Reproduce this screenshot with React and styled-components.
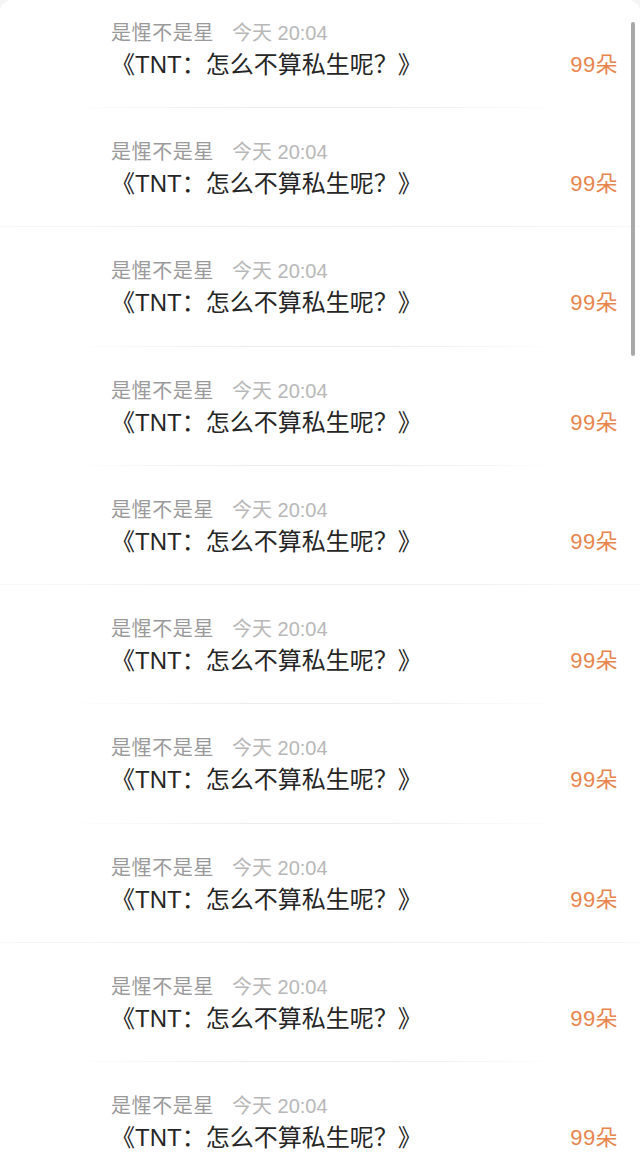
import React from 'react'
import styled, { createGlobalStyle } from 'styled-components'

const GlobalStyle = createGlobalStyle`
  html, body {
    margin: 0;
    padding: 0;
    background: #f4f4f4;
  }
  body {
    font-family: "Liberation Sans", "Noto Sans CJK SC", sans-serif;
    -webkit-font-smoothing: antialiased;
  }
`

const Sheet = styled.div`
  position: relative;
  width: 640px;
  height: 1165px;
  overflow: hidden;
  background: #ffffff;
  border-radius: 12px 12px 0 0;
`

const List = styled.ul`
  list-style: none;
  margin: 0;
  padding: 0;
`

const Item = styled.li`
  position: relative;
  height: 119.22px;
  box-sizing: border-box;
  padding: 20px 22px 0 111px;
  display: grid;
  grid-template-columns: 1fr auto;
  grid-template-rows: 26px 30px;
  row-gap: 4px;
`

const Meta = styled.div`
  grid-column: 1 / 3;
  display: flex;
  align-items: center;
  gap: 18px;
  font-size: 20px;
  line-height: 26px;
  white-space: nowrap;
`

const Author = styled.span`
  color: #9a9a9a;
  letter-spacing: 0.6px;
`

const Time = styled.span`
  color: #b8b8b8;
`

const Title = styled.div`
  font-size: 24px;
  line-height: 30px;
  color: #262626;
  white-space: nowrap;
`

const Amount = styled.div`
  font-size: 22px;
  line-height: 30px;
  color: #e8854d;
  text-align: right;
  letter-spacing: 0.4px;
  white-space: nowrap;
`

const Divider = styled.div`
  position: absolute;
  left: 0;
  right: 0;
  bottom: 11px;
  height: 1px;
  background: ${p => p.$full
    ? 'linear-gradient(90deg, #f8f8f8 0%, #eeeeee 40%, #eeeeee 60%, #f8f8f8 100%)'
    : 'linear-gradient(90deg, rgba(236,236,236,0) 10%, #ececec 40%, #ececec 60%, rgba(236,236,236,0) 88%)'};
`

const Scrollbar = styled.div`
  position: absolute;
  top: 22px;
  right: 5px;
  width: 4px;
  height: 334px;
  border-radius: 2px;
  background: #a9a9a9;
`

const fullDividers = [1, 4, 7]

const rows = Array.from({ length: 10 }, (_, i) => ({
  id: i,
  author: '是惺不是星',
  time: '今天 20:04',
  title: '《TNT：怎么不算私生呢？》',
  amount: '99朵'
}))

export default function App () {
  return (
    <Sheet>
      <GlobalStyle />
      <List>
        {rows.map(r => (
          <Item key={r.id}>
            <Meta>
              <Author>{r.author}</Author>
              <Time>{r.time}</Time>
            </Meta>
            <Title>{r.title}</Title>
            <Amount>{r.amount}</Amount>
            <Divider $full={fullDividers.includes(r.id)} />
          </Item>
        ))}
      </List>
      <Scrollbar />
    </Sheet>
  )
}
